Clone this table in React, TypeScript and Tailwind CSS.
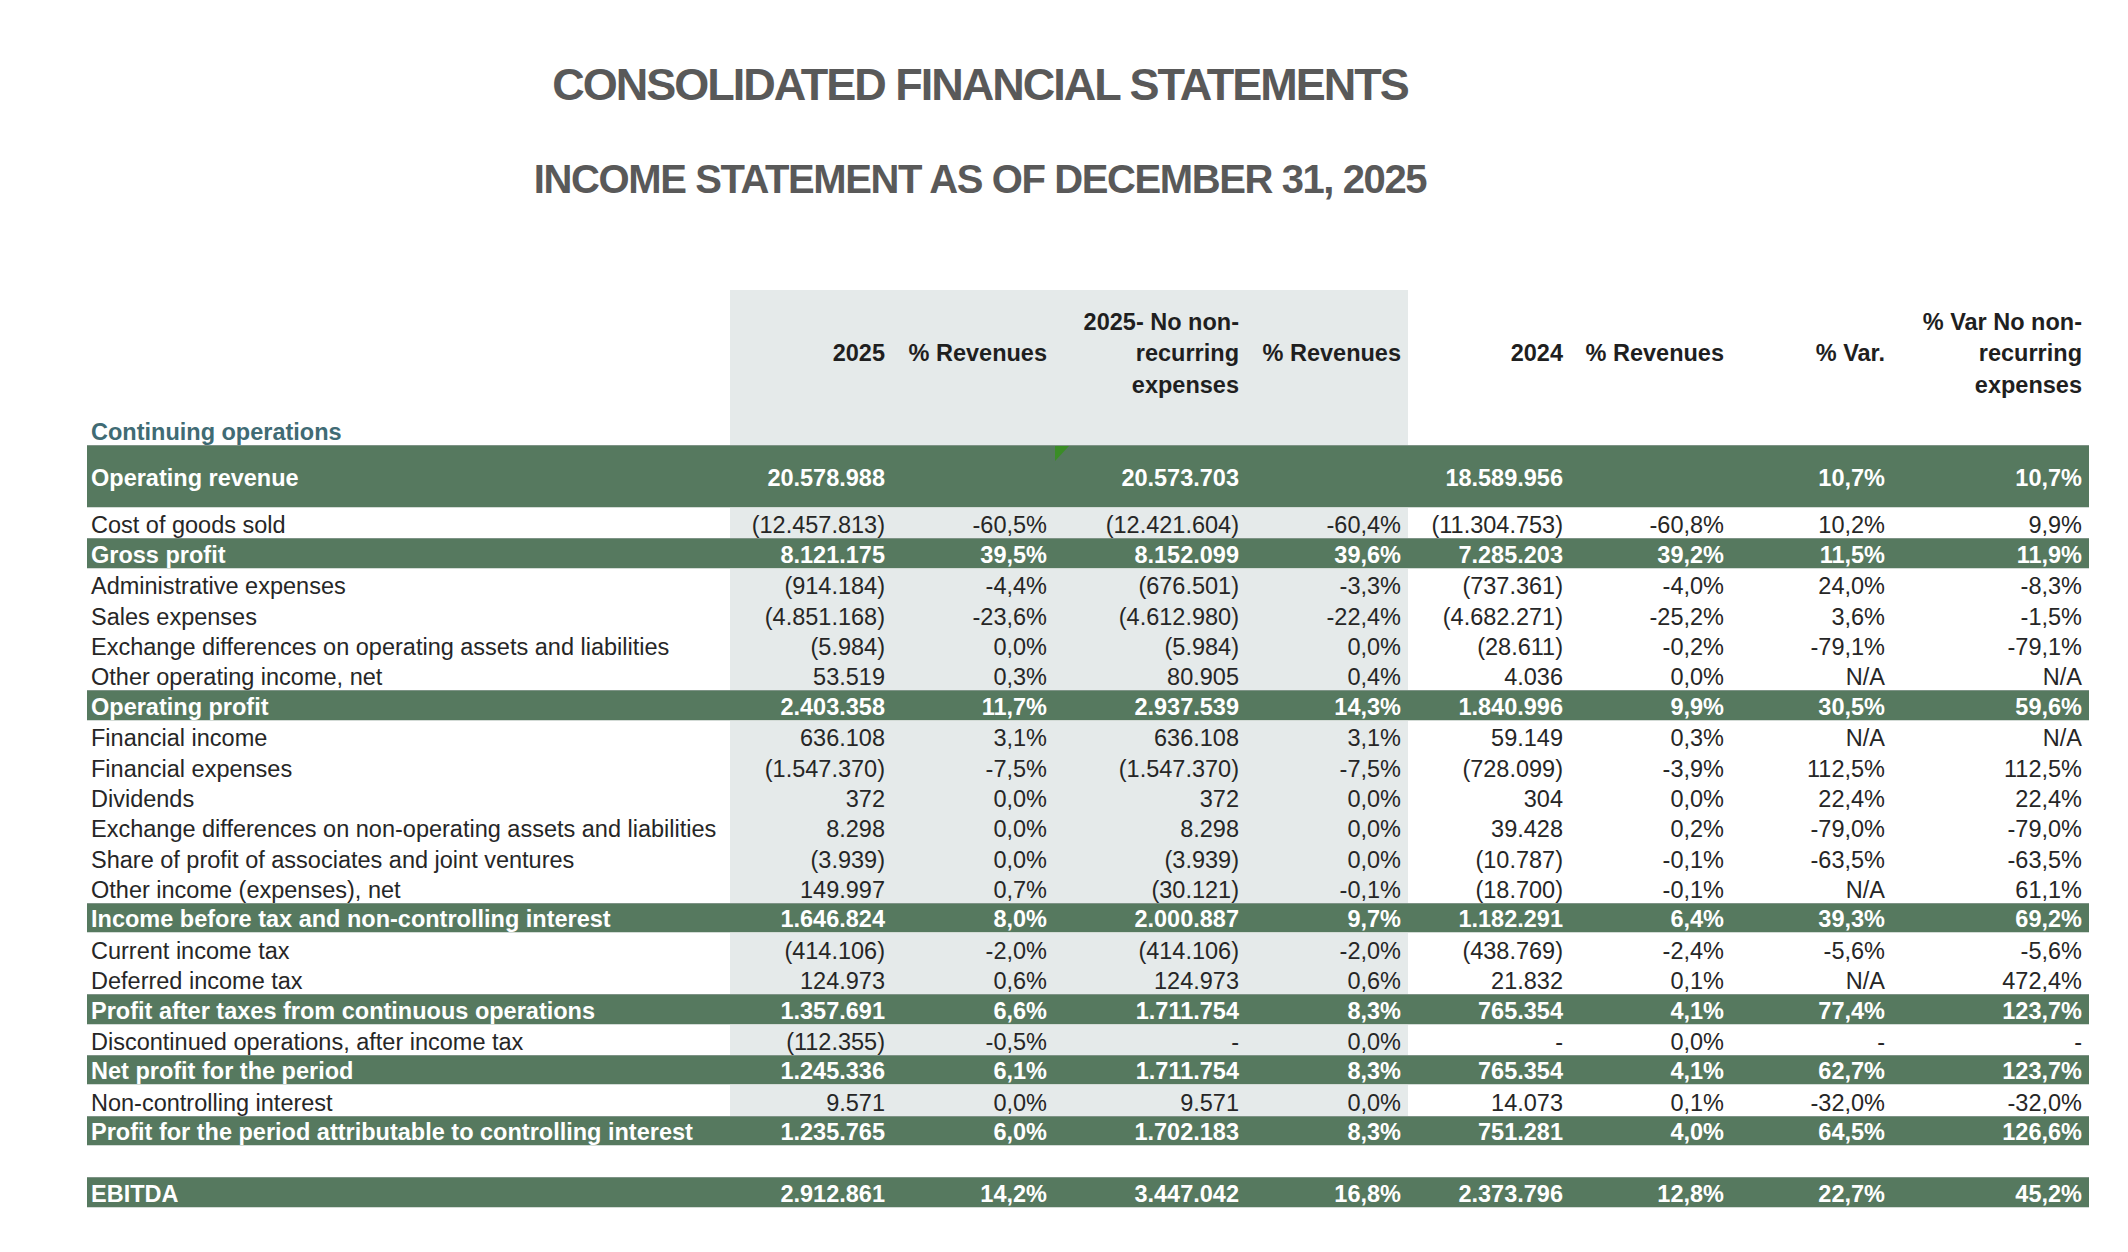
import React from "react";

type Row = { label: string; values: string[]; band?: boolean };

const rows: Row[] = [
	{ label: "Cost of goods sold", values: ["(12.457.813)", "-60,5%", "(12.421.604)", "-60,4%", "(11.304.753)", "-60,8%", "10,2%", "9,9%"] },
	{ label: "Gross profit", band: true, values: ["8.121.175", "39,5%", "8.152.099", "39,6%", "7.285.203", "39,2%", "11,5%", "11,9%"] },
	{ label: "Administrative expenses", values: ["(914.184)", "-4,4%", "(676.501)", "-3,3%", "(737.361)", "-4,0%", "24,0%", "-8,3%"] },
	{ label: "Sales expenses", values: ["(4.851.168)", "-23,6%", "(4.612.980)", "-22,4%", "(4.682.271)", "-25,2%", "3,6%", "-1,5%"] },
	{ label: "Exchange differences on operating assets and liabilities", values: ["(5.984)", "0,0%", "(5.984)", "0,0%", "(28.611)", "-0,2%", "-79,1%", "-79,1%"] },
	{ label: "Other operating income, net", values: ["53.519", "0,3%", "80.905", "0,4%", "4.036", "0,0%", "N/A", "N/A"] },
	{ label: "Operating profit", band: true, values: ["2.403.358", "11,7%", "2.937.539", "14,3%", "1.840.996", "9,9%", "30,5%", "59,6%"] },
	{ label: "Financial income", values: ["636.108", "3,1%", "636.108", "3,1%", "59.149", "0,3%", "N/A", "N/A"] },
	{ label: "Financial expenses", values: ["(1.547.370)", "-7,5%", "(1.547.370)", "-7,5%", "(728.099)", "-3,9%", "112,5%", "112,5%"] },
	{ label: "Dividends", values: ["372", "0,0%", "372", "0,0%", "304", "0,0%", "22,4%", "22,4%"] },
	{ label: "Exchange differences on non-operating assets and liabilities", values: ["8.298", "0,0%", "8.298", "0,0%", "39.428", "0,2%", "-79,0%", "-79,0%"] },
	{ label: "Share of profit of associates and joint ventures", values: ["(3.939)", "0,0%", "(3.939)", "0,0%", "(10.787)", "-0,1%", "-63,5%", "-63,5%"] },
	{ label: "Other income (expenses), net", values: ["149.997", "0,7%", "(30.121)", "-0,1%", "(18.700)", "-0,1%", "N/A", "61,1%"] },
	{ label: "Income before tax and non-controlling interest", band: true, values: ["1.646.824", "8,0%", "2.000.887", "9,7%", "1.182.291", "6,4%", "39,3%", "69,2%"] },
	{ label: "Current income tax", values: ["(414.106)", "-2,0%", "(414.106)", "-2,0%", "(438.769)", "-2,4%", "-5,6%", "-5,6%"] },
	{ label: "Deferred income tax", values: ["124.973", "0,6%", "124.973", "0,6%", "21.832", "0,1%", "N/A", "472,4%"] },
	{ label: "Profit after taxes from continuous operations", band: true, values: ["1.357.691", "6,6%", "1.711.754", "8,3%", "765.354", "4,1%", "77,4%", "123,7%"] },
	{ label: "Discontinued operations, after income tax", values: ["(112.355)", "-0,5%", "-", "0,0%", "-", "0,0%", "-", "-"] },
	{ label: "Net profit for the period", band: true, values: ["1.245.336", "6,1%", "1.711.754", "8,3%", "765.354", "4,1%", "62,7%", "123,7%"] },
	{ label: "Non-controlling interest", values: ["9.571", "0,0%", "9.571", "0,0%", "14.073", "0,1%", "-32,0%", "-32,0%"] },
	{ label: "Profit for the period attributable to controlling interest", band: true, values: ["1.235.765", "6,0%", "1.702.183", "8,3%", "751.281", "4,0%", "64,5%", "126,6%"] },
];

const ebitda = ["2.912.861", "14,2%", "3.447.042", "16,8%", "2.373.796", "12,8%", "22,7%", "45,2%"];

// widths of the 8 number columns, first 4 are shaded
const cols = ["w-[163px] pr-[8px]", "w-[162px] pr-[8px]", "w-[192px] pr-[8px]", "w-[161px] pr-[7px]", "w-[163px] pr-[8px]", "w-[161px] pr-[8px]", "w-[161px] pr-[8px]", "w-[196px] pr-[7px]"];

const band = "bg-[#56795f] text-white font-bold border-t border-t-[#7e9386] border-b border-b-[#d3dbd6]";

function Cell({ className, children }: { className: string; children?: React.ReactNode }) {
	return <div className={`flex h-full shrink-0 items-end justify-end pb-[1px] leading-[24px] ${className}`}>{children}</div>;
}

function DataRow({ row }: { row: Row }) {
	return (
		<div className={`flex h-[30.4px] ${row.band ? band : "text-[#262626]"}`}>
			<div className="flex h-full w-[643px] shrink-0 items-end pb-[1px] pl-[4px] leading-[24px] whitespace-nowrap">{row.label}</div>
			{row.values.map((v, i) => (
				<Cell key={i} className={`${cols[i]} ${!row.band && i < 4 ? "bg-[#e5eaea]" : ""}`}>
					{v}
				</Cell>
			))}
		</div>
	);
}

export default function App() {
	return (
		<div className="h-[1252px] w-[2128px] bg-white pt-[62px] text-[23.5px]" style={{ fontFamily: '"Liberation Sans", Arial, sans-serif' }}>
			<div className="w-[1960px] text-center font-bold text-[#595959]">
				<h1 className="text-[45px] leading-[45px] tracking-[-2px]">CONSOLIDATED FINANCIAL STATEMENTS</h1>
				<h2 className="mt-[52px] text-[40px] leading-[40px] tracking-[-1.4px]">INCOME STATEMENT AS OF DECEMBER 31, 2025</h2>
			</div>

			<div className="ml-[87px] mt-[91px] w-[2002px]">
				{/* column headers */}
				<div className="flex h-[128px] font-bold text-[#1f1f1f] leading-[31.5px]">
					<div className="w-[643px] shrink-0" />
					{[
						["2025"],
						["% Revenues"],
						["2025- No non-", "recurring", "expenses"],
						["% Revenues"],
						["2024"],
						["% Revenues"],
						["% Var."],
						["% Var No non-", "recurring", "expenses"],
					].map((lines, i) => (
						<div key={i} className={`flex h-full shrink-0 flex-col items-end justify-center text-right whitespace-nowrap ${cols[i]} ${i < 4 ? "bg-[#e5eaea]" : ""}`}>
							{lines.map((l) => (
								<span key={l}>{l}</span>
							))}
						</div>
					))}
				</div>

				<div className="flex h-[27px]">
					<div className="flex h-full w-[643px] shrink-0 items-end pb-[1px] pl-[4px] font-bold leading-[24px] text-[#406b74]">Continuing operations</div>
					<div className="h-full w-[678px] shrink-0 bg-[#e5eaea]" />
				</div>

				{/* operating revenue, double height */}
				<div className={`flex h-[63px] ${band}`}>
					<div className="flex h-full w-[643px] shrink-0 items-end pb-[17px] pl-[4px] leading-[24px]">Operating revenue</div>
					{["20.578.988", "", "20.573.703", "", "18.589.956", "", "10,7%", "10,7%"].map((v, i) => (
						<div key={i} className={`relative flex h-full shrink-0 items-end justify-end pb-[17px] leading-[24px] ${cols[i]}`}>
							{i === 2 && (
								<span className="absolute left-0 top-0 h-0 w-0 border-r-[14px] border-t-[15px] border-r-transparent border-t-[#3a8d26]" />
							)}
							{v}
						</div>
					))}
				</div>

				{rows.map((r) => (
					<DataRow key={r.label} row={r} />
				))}

				<div className="h-[31px]" />

				<DataRow row={{ label: "EBITDA", band: true, values: ebitda }} />
			</div>
		</div>
	);
}
